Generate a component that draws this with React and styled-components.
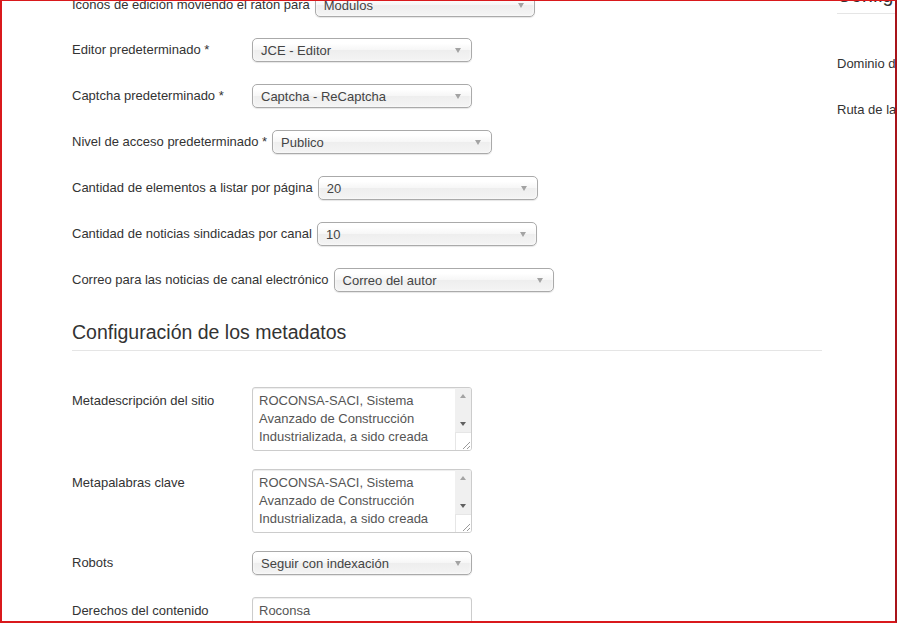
import styled, { createGlobalStyle } from 'styled-components';

const GlobalStyle = createGlobalStyle`
  html, body {
    margin: 0;
    padding: 0;
    background: #fff;
  }
  body {
    font-family: "Liberation Sans", Arial, sans-serif;
    font-size: 13px;
    color: #333;
  }
`;

const Frame = styled.div`
  width: 897px;
  height: 623px;
  box-sizing: border-box;
  border-style: solid;
  border-color: #d9191c;
  border-width: 1px 2px 2px 2px;
  border-right-color: #a8141a;
  overflow: hidden;
  display: flex;
  align-items: flex-start;
  padding-left: 70px;
  background: #fff;
`;

const MainColumn = styled.div`
  width: 750px;
  flex-shrink: 0;
  margin-top: -8px;
`;

const SideColumn = styled.div`
  width: 300px;
  flex-shrink: 0;
  margin-left: 15px;
  margin-top: -18px;
`;

const Row = styled.div`
  display: flex;
  align-items: ${(p) => (p.$top ? 'flex-start' : 'center')};
  min-height: 24px;
  margin-bottom: ${(p) => p.$gap ?? 22}px;
`;

const Label = styled.label`
  min-width: 175px;
  margin-right: 5px;
  white-space: nowrap;
  line-height: 18px;
  color: #333;
  padding-top: ${(p) => (p.$top ? 5 : 0)}px;
`;

const SelectBox = styled.div`
  width: 220px;
  height: 24px;
  box-sizing: border-box;
  border: 1px solid #aaa;
  border-radius: 5px;
  background: linear-gradient(#fff 20%, #f6f6f6 50%, #eee 52%, #f4f4f4 100%);
  box-shadow: inset 0 0 3px #fff, 0 1px 1px rgba(0, 0, 0, 0.1);
  display: flex;
  align-items: center;
  justify-content: space-between;
  padding: 0 10px 0 8px;
  color: #444;
  flex-shrink: 0;
`;

const Caret = styled.span`
  width: 0;
  height: 0;
  border-left: 3.5px solid transparent;
  border-right: 3.5px solid transparent;
  border-top: 5px solid #a3a3a3;
`;

const Heading = styled.h2`
  margin: ${(p) => p.$mt ?? 0}px 0 ${(p) => p.$mb ?? 36}px;
  padding: 0 0 6px;
  font-size: 19.5px;
  line-height: 24px;
  font-weight: normal;
  color: #333;
  border-bottom: 1px solid #e5e5e5;
  white-space: nowrap;
`;

const TextBox = styled.div`
  width: 220px;
  height: 64px;
  box-sizing: border-box;
  border: 1px solid #ccc;
  border-radius: 3px;
  box-shadow: inset 0 1px 1px rgba(0, 0, 0, 0.075);
  display: flex;
  overflow: hidden;
  flex-shrink: 0;
`;

const TextContent = styled.div`
  flex: 1;
  padding: 4px 6px 0;
  line-height: 18px;
  color: #555;
  white-space: pre;
  overflow: hidden;
`;

const ScrollBar = styled.div`
  width: 16px;
  display: flex;
  flex-direction: column;
`;

const ScrollTrack = styled.div`
  flex: 1;
  background: #f0f0f0;
  display: flex;
  flex-direction: column;
  justify-content: space-between;
`;

const ScrollButton = styled.div`
  height: 16px;
  display: flex;
  align-items: center;
  justify-content: center;
`;

const ArrowUp = styled.span`
  width: 0;
  height: 0;
  border-left: 3.5px solid transparent;
  border-right: 3.5px solid transparent;
  border-bottom: 4px solid #a3a3a3;
`;

const ArrowDown = styled.span`
  width: 0;
  height: 0;
  border-left: 3.5px solid transparent;
  border-right: 3.5px solid transparent;
  border-top: 4px solid #606060;
`;

const Corner = styled.div`
  height: 17px;
  background: #fff;
  border-top: 1px solid #e6e6e6;
  border-left: 1px solid #e6e6e6;
  display: flex;
  align-items: flex-end;
  justify-content: flex-end;
`;

const TextInput = styled.div`
  width: 220px;
  height: 28px;
  box-sizing: border-box;
  border: 1px solid #ccc;
  border-radius: 3px;
  box-shadow: inset 0 1px 1px rgba(0, 0, 0, 0.075);
  padding: 4px 6px;
  line-height: 18px;
  color: #555;
  flex-shrink: 0;
`;

function Select({ value }) {
  return (
    <SelectBox>
      <span>{value}</span>
      <Caret />
    </SelectBox>
  );
}

function TextArea({ text }) {
  return (
    <TextBox>
      <TextContent>{text}</TextContent>
      <ScrollBar>
        <ScrollTrack>
          <ScrollButton>
            <ArrowUp />
          </ScrollButton>
          <ScrollButton>
            <ArrowDown />
          </ScrollButton>
        </ScrollTrack>
        <Corner>
          <svg width="10" height="10" viewBox="0 0 10 10">
            <line x1="2" y1="9" x2="9" y2="2" stroke="#9a9a9a" strokeWidth="1" />
            <line x1="6" y1="9" x2="9" y2="6" stroke="#9a9a9a" strokeWidth="1" />
          </svg>
        </Corner>
      </ScrollBar>
    </TextBox>
  );
}

const metaText =
  'ROCONSA-SACI, Sistema\nAvanzado de Construcción\nIndustrializada, a sido creada\ncon el fin de brindar a sus';

const selectRows = [
  ['Iconos de edición moviendo el ratón para', 'Modulos'],
  ['Editor predeterminado *', 'JCE - Editor'],
  ['Captcha predeterminado *', 'Captcha - ReCaptcha'],
  ['Nivel de acceso predeterminado *', 'Publico'],
  ['Cantidad de elementos a listar por página', '20'],
  ['Cantidad de noticias sindicadas por canal', '10'],
  ['Correo para las noticias de canal electrónico', 'Correo del autor'],
];

export default function App() {
  return (
    <>
      <GlobalStyle />
      <Frame>
        <MainColumn>
          {selectRows.map(([label, value], i) => (
            <Row key={label} $gap={i === 0 ? 21 : 22}>
              <Label>{label}</Label>
              <Select value={value} />
            </Row>
          ))}

          <Heading $mt={28}>Configuración de los metadatos</Heading>

          <Row $top $gap={18}>
            <Label $top>Metadescripción del sitio</Label>
            <TextArea text={metaText} />
          </Row>
          <Row $top $gap={18}>
            <Label $top>Metapalabras clave</Label>
            <TextArea text={metaText} />
          </Row>
          <Row>
            <Label>Robots</Label>
            <Select value="Seguir con indexación" />
          </Row>
          <Row>
            <Label>Derechos del contenido</Label>
            <TextInput>Roconsa</TextInput>
          </Row>
        </MainColumn>

        <SideColumn>
          <Heading $mb={38}>Configuración de las cookies</Heading>
          <Row>
            <Label>Dominio de la cookie</Label>
          </Row>
          <Row>
            <Label>Ruta de la cookie</Label>
          </Row>
        </SideColumn>
      </Frame>
    </>
  );
}
